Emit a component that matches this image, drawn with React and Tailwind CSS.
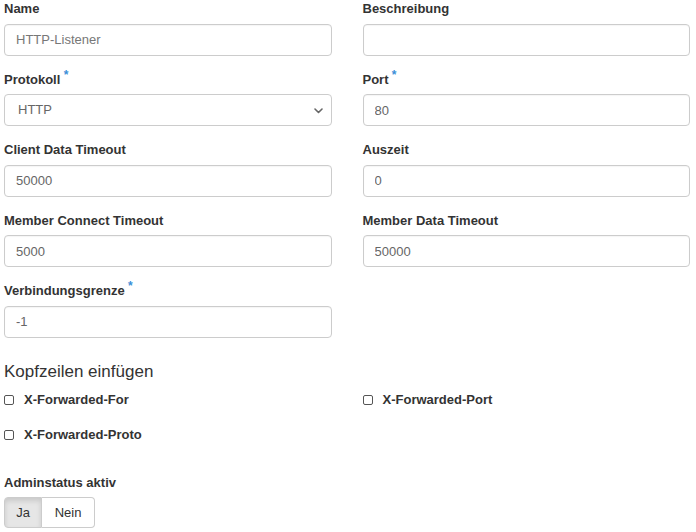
import { useState } from 'react';

const font = { fontFamily: '"Liberation Sans", Arial, sans-serif' };

function Label({ children, required }) {
  return (
    <label className="block text-[13px] leading-[18.5px] font-bold text-[#333] mb-[5px]">
      <span className="relative">
        {children}
        {required && (
          <span className="absolute -right-[8px] -top-[3px] text-[#3a8fd8] text-[12px] leading-none">*</span>
        )}
      </span>
    </label>
  );
}

function Field({ label, required, value, placeholder }) {
  return (
    <div className="mb-[15px]">
      <Label required={required}>{label}</Label>
      <input
        className="block w-full h-[32px] px-[11px] text-[13px] text-[#666] placeholder:text-[#777] bg-white border border-[#ccc] rounded-[4px] shadow-[inset_0_1px_1px_rgba(0,0,0,0.04)] outline-none"
        defaultValue={value}
        placeholder={placeholder}
      />
    </div>
  );
}

function Check({ label }) {
  const [on, setOn] = useState(false);
  return (
    <label className="flex items-center h-[18px] text-[13px] font-bold text-[#333] cursor-pointer" onClick={() => setOn(!on)}>
      <span className="w-[10px] h-[10px] border border-[#555] rounded-[2px] bg-white mr-[10px] flex items-center justify-center">
        {on && <span className="w-[6px] h-[6px] bg-[#555]" />}
      </span>
      {label}
    </label>
  );
}

export default function App() {
  const [admin, setAdmin] = useState(true);

  return (
    <div className="w-[696px] h-[532px] bg-white pl-[4px] pr-[6px] overflow-hidden" style={font}>
      <div className="grid grid-cols-2 gap-x-[31px]">
        <Field label="Name" placeholder="HTTP-Listener" />
        <Field label="Beschreibung" />

        <div className="mb-[15px]">
          <Label required>Protokoll</Label>
          <div className="relative h-[32px] border border-[#ccc] rounded-[4px] bg-white flex items-center pl-[13px] text-[13px] text-[#666]">
            HTTP
            <svg className="absolute right-[8px] top-[13px]" width="9" height="6" viewBox="0 0 9 6">
              <path d="M1 1 L4.5 4.5 L8 1" fill="none" stroke="#666" strokeWidth="1.6" strokeLinecap="round" strokeLinejoin="round" />
            </svg>
          </div>
        </div>
        <Field label="Port" required value="80" />

        <Field label="Client Data Timeout" value="50000" />
        <Field label="Auszeit" value="0" />

        <Field label="Member Connect Timeout" value="5000" />
        <Field label="Member Data Timeout" value="50000" />

        <Field label="Verbindungsgrenze" required value="-1" />
        <div />
      </div>

      <h4 className="text-[17px] leading-[19px] text-[#333] mt-[9px] mb-[10px]">Kopfzeilen einfügen</h4>

      <div className="grid grid-cols-2 gap-x-[31px] gap-y-[17px]">
        <Check label="X-Forwarded-For" />
        <Check label="X-Forwarded-Port" />
        <Check label="X-Forwarded-Proto" />
      </div>

      <div className="mt-[30px]">
        <Label>Adminstatus aktiv</Label>
        <div className="inline-flex h-[31px] text-[13px] text-[#333]">
          <button
            onClick={() => setAdmin(true)}
            className={`w-[38px] border border-[#ccc] rounded-l-[4px] ${admin ? 'bg-[#e6e6e6] shadow-[inset_0_3px_5px_rgba(0,0,0,0.125)]' : 'bg-white'}`}
          >
            Ja
          </button>
          <button
            onClick={() => setAdmin(false)}
            className={`w-[53px] border border-l-0 border-[#ccc] rounded-r-[4px] ${!admin ? 'bg-[#e6e6e6] shadow-[inset_0_3px_5px_rgba(0,0,0,0.125)]' : 'bg-white'}`}
          >
            Nein
          </button>
        </div>
      </div>
    </div>
  );
}
